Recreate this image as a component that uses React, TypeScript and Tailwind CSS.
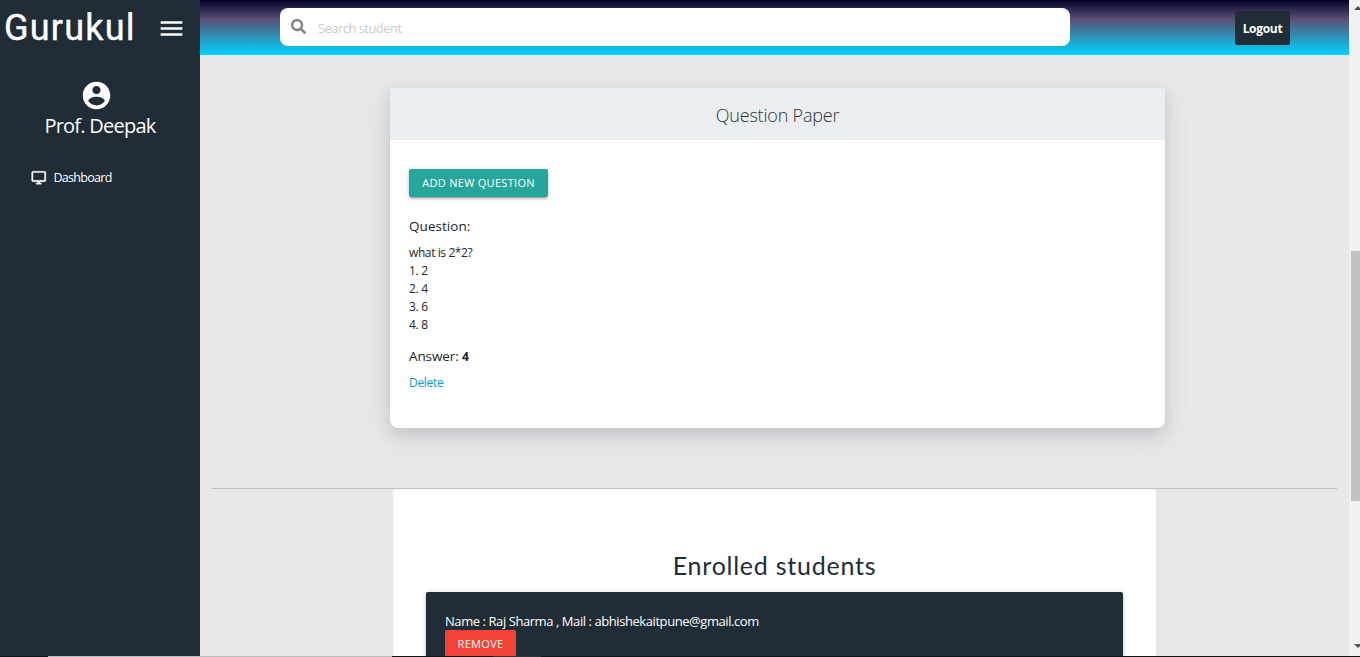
import React from "react";
import { FaSearch } from "react-icons/fa";

const options = ["2", "4", "6", "8"];

function Sidebar() {
  return (
    <aside className="h-full w-[200px] shrink-0 bg-[#202d36] text-white">
      <div className="flex h-[55px] items-center justify-between pr-[14px] pl-[4px]">
        <span className="font-['Roboto',sans-serif] text-[36px] leading-[52px] tracking-[1.2px] whitespace-nowrap [-webkit-text-stroke:0.4px_white]">
          Gurukul
        </span>
        <svg viewBox="0 0 24 24" className="mt-px size-[29px] shrink-0" fill="currentColor">
          <path d="M3 18h18v-2H3v2zm0-5h18v-2H3v2zm0-7v2h18V6H3z" />
        </svg>
      </div>
      <div className="flex flex-col items-center pt-[24px]">
        <svg viewBox="0 0 24 24" className="mr-[8px] size-[33px]" fill="currentColor">
          <path d="M12 2C6.480 2 2 6.480 2 12s4.480 10 10 10 10-4.480 10-10S17.520 2 12 2zm0 3c1.660 0 3 1.340 3 3s-1.340 3-3 3-3-1.340-3-3 1.340-3 3-3zm0 14.200c-2.500 0-4.710-1.280-6-3.220.03-1.990 4-3.080 6-3.080 1.990 0 5.970 1.090 6 3.080-1.290 1.940-3.500 3.220-6 3.220z" />
        </svg>
        <p className="text-[20px] leading-[28px] tracking-[-0.75px]">Prof. Deepak</p>
      </div>
      <nav className="flex items-center gap-[7px] pt-[28px] pl-[31px]">
        <svg viewBox="0 0 24 24" className="size-[15.500px]" fill="currentColor">
          <path
            d="M21 2H3c-1.100 0-2 .9-2 2v12c0 1.100.9 2 2 2h7v2H8v2h8v-2h-2v-2h7c1.100 0 2-.9 2-2V4c0-1.100-.9-2-2-2zm0 14H3V4h18v12z"
            stroke="currentColor"
            strokeWidth="0.6"
          />
        </svg>
        <a className="text-[12.500px] leading-[20px] tracking-[-0.700px]">Dashboard</a>
      </nav>
    </aside>
  );
}

function TopBar() {
  return (
    <header className="flex h-[55px] shrink-0 items-start bg-[linear-gradient(to_bottom,#02002b_0%,#5a5276_35%,#00d4ff_100%)] pr-[59px] pl-[80px]">
      <div className="mt-[8px] flex h-[38px] w-[790px] items-center rounded-[8px] bg-white pl-[11px]">
        <FaSearch className="mb-[2px] size-[15px] text-[#808080]" />
        <span className="pt-[4px] pl-[12px] text-[13px] tracking-[-0.550px] text-[#cbcbcb]">Search student</span>
      </div>
      <button className="mt-[11px] ml-auto h-[34px] w-[55px] rounded-[2px] bg-[#202d36] pt-px text-[12px] font-bold tracking-[-0.300px] text-white">
        Logout
      </button>
    </header>
  );
}

function QuestionCard() {
  return (
    <section className="mt-[33px] ml-[190px] h-[340px] w-[775px] shrink-0 rounded-b-[8px] bg-white shadow-[0_8px_26px_0_rgba(80,90,105,0.16),0_6px_14px_0_rgba(80,90,105,0.13)]">
      <h2 className="h-[52px] bg-[#eaeef1] text-center text-[18px] leading-[55px] font-light tracking-[-0.200px] text-[#303338]">
        Question Paper
      </h2>
      <div className="pt-[29px] pl-[19px] text-[12px] leading-[18px] text-[#212529]">
        <button className="block h-[28px] w-[139px] rounded-[2px] bg-[#26a69a] text-[11px] tracking-[0.300px] text-white shadow-[0_2px_2px_0_rgba(0,0,0,0.14),0_3px_1px_-2px_rgba(0,0,0,0.12),0_1px_5px_0_rgba(0,0,0,0.2)]">
          ADD NEW QUESTION
        </button>
        <h3 className="mt-[19px] text-[13.500px] leading-[20px] tracking-[0.050px]">Question:</h3>
        <p className="mt-[8px] tracking-[-0.400px]">what is 2*2?</p>
        {options.map((option, i) => (
          <p key={option} className="tracking-[-0.300px]">
            {i + 1}. {option}
          </p>
        ))}
        <h3 className="mt-[12px] text-[13.500px] leading-[20px] tracking-[-0.100px]">
          Answer: <b className="text-[12px]">4</b>
        </h3>
        <a className="mt-[7px] block tracking-[-0.300px] text-[#039be5]">Delete</a>
      </div>
    </section>
  );
}

function EnrolledStudents() {
  return (
    <section className="ml-[193px] min-h-0 w-[763px] flex-1 overflow-hidden rounded-t-[4px] bg-white px-[33px] pt-[58px]">
      <h2 className="text-center font-['Lato',sans-serif] text-[25px] leading-[36px] font-normal tracking-[0.750px] text-[#202d36]">
        Enrolled students
      </h2>
      <div className="mt-[9px] h-[120px] rounded-[2px] bg-[#202d36] pt-[20px] pl-[19px] text-white shadow-[0_2px_2px_0_rgba(0,0,0,0.14),0_1px_5px_0_rgba(0,0,0,0.2)]">
        <p className="text-[13px] leading-[18px] tracking-[-0.430px]">
          Name : Raj Sharma , Mail : abhishekaitpune@gmail.com
        </p>
        <button className="block h-[28px] w-[71px] rounded-[2px] bg-[#f44336] text-[11px] tracking-[0.300px]">
          REMOVE
        </button>
      </div>
    </section>
  );
}

function ScrollBar() {
  return (
    <div className="flex h-full w-[11px] shrink-0 flex-col overflow-hidden bg-[#f1f1f1] pl-[2px]">
      <svg width="9" height="10" className="shrink-0" fill="#505050">
        <path d="M3 10h8L7 6z" />
      </svg>
      <div className="mt-[241px] h-[250px] bg-[#c1c1c1]" />
      <svg width="9" height="12" className="mt-auto shrink-0" fill="#505050">
        <path d="M3 0h8L7 4z" />
      </svg>
    </div>
  );
}

export default function App() {
  return (
    <div className="flex h-[657px] w-[1360px] flex-col overflow-hidden bg-[#e8e8e8] font-['Open_Sans','Noto_Sans',sans-serif]">
      <div className="flex min-h-0 flex-1">
        <Sidebar />
        <main className="flex min-w-0 flex-1 flex-col">
          <TopBar />
          <QuestionCard />
          <hr className="mt-[60px] mr-[12px] ml-[12px] h-px shrink-0 border-0 bg-[#c2c2c2]" />
          <EnrolledStudents />
        </main>
        <ScrollBar />
      </div>
      <div className="flex h-px shrink-0 bg-[#111111]">
        <div className="ml-[48px] w-[344px] bg-[#bcbcbc]" />
        <div className="ml-[101px] w-[48px] bg-[#333333]" />
      </div>
    </div>
  );
}
